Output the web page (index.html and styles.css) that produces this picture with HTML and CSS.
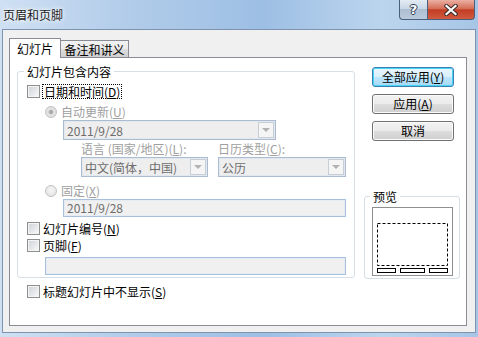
FILE: index.html
```html
<!DOCTYPE html>
<html lang="zh-CN">
<head>
  <meta charset="UTF-8">
  <title>页眉和页脚</title>
  <link rel="stylesheet" href="styles.css">
</head>
<body>
  <div class="window">
    <!-- Title bar -->
    <div class="titlebar">
      <div class="title">页眉和页脚</div>
      <div class="caption-btns">
        <div class="cap-btn help"><span>?</span></div>
        <div class="cap-btn close">
          <svg width="14" height="12" viewBox="0 0 14 12">
            <path d="M2.5 2 L11.5 10 M11.5 2 L2.5 10" stroke="#3a2a2a" stroke-width="4.2" stroke-linecap="square"/>
            <path d="M2.5 2 L11.5 10 M11.5 2 L2.5 10" stroke="#ffffff" stroke-width="2.2" stroke-linecap="square"/>
          </svg>
        </div>
      </div>
    </div>

    <div class="client">
      <!-- Tabs -->
      <div class="tabs">
        <div class="tab active">幻灯片</div>
        <div class="tab">备注和讲义</div>
      </div>

      <div class="panel">
        <div class="left-col">
          <fieldset class="group content-group">
            <legend>幻灯片包含内容</legend>

            <div class="opt row-date">
              <span class="checkbox"></span>
              <span class="label focus">日期和时间(<u>D</u>)</span>
            </div>

            <div class="opt radio-row row-auto disabled">
              <span class="radio checked"></span>
              <span class="label">自动更新(<u>U</u>)</span>
            </div>

            <div class="combo combo-date">
              <span class="combo-text">2011/9/28</span>
              <span class="drop"><i></i></span>
            </div>

            <div class="lang-grid">
              <div class="sub-label">语言 (国家/地区)(<u>L</u>):</div>
              <div class="sub-label">日历类型(<u>C</u>):</div>
              <div class="combo">
                <span class="combo-text">中文(简体，中国)</span>
                <span class="drop"><i></i></span>
              </div>
              <div class="combo">
                <span class="combo-text">公历</span>
                <span class="drop"><i></i></span>
              </div>
            </div>

            <div class="opt radio-row row-fixed disabled">
              <span class="radio"></span>
              <span class="label">固定(<u>X</u>)</span>
            </div>

            <div class="textbox textbox-fixed">2011/9/28</div>

            <div class="opt row-number">
              <span class="checkbox"></span>
              <span class="label">幻灯片编号(<u>N</u>)</span>
            </div>

            <div class="opt row-footer">
              <span class="checkbox"></span>
              <span class="label">页脚(<u>F</u>)</span>
            </div>

            <div class="textbox textbox-footer"></div>
          </fieldset>

          <div class="opt row-title">
            <span class="checkbox"></span>
            <span class="label">标题幻灯片中不显示(<u>S</u>)</span>
          </div>
        </div>

        <div class="right-col">
          <button class="btn default">全部应用(<u>Y</u>)</button>
          <button class="btn">应用(<u>A</u>)</button>
          <button class="btn">取消</button>

          <fieldset class="group preview-group">
            <legend>预览</legend>
            <div class="preview">
              <svg width="79" height="67" viewBox="0 0 79 67">
                <rect x="4.5" y="15.5" width="70" height="42" fill="none" stroke="#000" stroke-width="1" stroke-dasharray="3 2"/>
                <rect x="4.5" y="60.5" width="18" height="4" fill="#fff" stroke="#000" stroke-width="1"/>
                <rect x="27.5" y="60.5" width="24" height="4" fill="#fff" stroke="#000" stroke-width="1"/>
                <rect x="56.5" y="60.5" width="18" height="4" fill="#fff" stroke="#000" stroke-width="1"/>
              </svg>
            </div>
          </fieldset>
        </div>
      </div>
    </div>
  </div>
</body>
</html>
```

FILE: styles.css
```css
html, body { margin: 0; padding: 0; background: #a9c6e6; }
body { font-family: "Noto Sans CJK SC", "Microsoft YaHei", sans-serif; font-size: 12px; color: #000; }
u { text-decoration: underline; text-underline-offset: 1px; }

.window { width: 478px; height: 337px; box-sizing: border-box; display: flex; flex-direction: column;
  background: linear-gradient(to right, #cfe0f3 0%, #b3cdea 25%, #9dbfe4 55%, #bcd5ee 80%, #a6c5e6 100%); }

/* title bar */
.titlebar { height: 29px; display: flex; justify-content: space-between; align-items: flex-start; flex-shrink: 0; }
.title { padding: 8px 0 0 3px; line-height: 14px; color: #1a1a1a; text-shadow: 0 0 6px #fff, 0 0 3px #fff; }
.caption-btns { display: flex; margin-right: 3px; }
.cap-btn { height: 19px; border: 1px solid #4a5f7d; border-top: none; display: flex; align-items: center; justify-content: center; }
.cap-btn.help { width: 27px; border-right: none; border-bottom-left-radius: 4px;
  background: linear-gradient(#e3ebf4 0%, #c9d7e6 45%, #aebfd3 50%, #b9cadd 100%); }
.cap-btn.help span { font-family: "DejaVu Sans", sans-serif; font-weight: bold; font-size: 13px; color: #fff; line-height: 14px;
  text-shadow: 1px 0 0 #2f3d52, -1px 0 0 #2f3d52, 0 1px 0 #2f3d52, 0 -1px 0 #2f3d52; }
.cap-btn.close { width: 46px; border-bottom-right-radius: 4px;
  background: linear-gradient(#eab0a3 0%, #d66e58 45%, #c23d24 52%, #d15b40 100%); }

/* client area */
.client { flex: 1; margin: 0 2px 4px 2px; border: 1px solid #7e93ad; background: #f0f0f0; padding: 8px 8px 0 6px; }

.tabs { display: flex; align-items: flex-end; height: 19px; position: relative; z-index: 1; }
.tab { box-sizing: border-box; border: 1px solid #898c95; border-bottom: none; text-align: center; }
.tab.active { width: 52px; height: 20px; margin-bottom: -1px; background: #fff; line-height: 18px; padding-top: 1px; }
.tab:not(.active) { width: 68px; height: 17px; border-left: none; line-height: 16px; padding-top: 1px;
  background: linear-gradient(#f2f2f2 0%, #ebebeb 50%, #dddddd 51%, #cfcfcf 100%); }

.panel { box-sizing: border-box; width: 458px; height: 269px; border: 1px solid #898c95; background: #fff;
  padding: 7px 0 0 7px; display: flex; gap: 9px; }

/* group boxes */
.group { margin: 0; border: 1px solid #d5dfe5; border-radius: 3px; }
.group legend { padding: 0 3px; line-height: 13px; }

.left-col { width: 338px; }
.content-group { box-sizing: border-box; width: 338px; padding: 0 8px 2px 9px; }
.content-group legend { margin-left: -3px; }

.opt { display: flex; align-items: center; height: 15px; }
.opt .label { line-height: 13px; }
.checkbox { box-sizing: border-box; width: 13px; height: 13px; border: 1px solid #8e8f8f; margin-right: 3px;
  background: linear-gradient(135deg, #cdd1d6 0%, #eceef0 70%, #f8f8f8 100%); box-shadow: inset 0 0 0 1px #f4f4f4; }
.focus { outline: 1px dotted #000; outline-offset: 0; padding: 0 1px 0 1px; }
.radio-row { padding-left: 18px; }
.radio { box-sizing: border-box; width: 12px; height: 12px; border-radius: 50%; border: 1px solid #c2c2c2; margin-right: 4px;
  background: radial-gradient(circle at 50% 40%, #f7f7f7 0%, #dedede 100%); }
.radio.checked { background: radial-gradient(circle, #a4a4a4 0%, #b4b4b4 28%, #e6e6e6 40%, #d8d8d8 100%); }
.disabled .label { color: #a0a0a0; }

.row-date { margin-top: 6px; }
.row-auto { margin-top: 5px; }

.combo { box-sizing: border-box; height: 20px; border: 1px solid #abbbd0; background: #eeeeee; box-shadow: inset 0 0 0 1px #e2e8ef;
  display: flex; align-items: center; justify-content: space-between; color: #6d6d6d; }
.combo-text { padding-left: 3px; line-height: 17px; white-space: nowrap; }
.drop { box-sizing: border-box; width: 16px; height: 16px; margin-right: 1px; border: 1px solid #c8ced6; background: #f5f5f5;
  display: flex; align-items: center; justify-content: center; flex-shrink: 0; }
.drop i { width: 0; height: 0; border-left: 4px solid transparent; border-right: 4px solid transparent; border-top: 4px solid #b2b2b2; }
.combo-date { width: 213px; margin: 1px 0 0 36px; }

.lang-grid { display: grid; grid-template-columns: 127px 128px; column-gap: 10px; row-gap: 2px; margin: 2px 0 0 54px; }
.sub-label { color: #a0a0a0; line-height: 13px; white-space: nowrap; }

.row-fixed { margin-top: 6px; }
.textbox { box-sizing: border-box; height: 18px; border: 1px solid #a9c0dc; background: #f0f0f0; box-shadow: inset 0 0 0 1px #e6ecf3;
  color: #6d6d6d; line-height: 16px; padding-left: 3px; }
.textbox-fixed { width: 283px; margin: 1px 0 0 36px; }
.row-number { margin-top: 4px; }
.row-footer { margin-top: 2px; }
.textbox-footer { width: 301px; margin: 4px 0 0 18px; }

.row-title { margin: 6px 0 0 10px; }

/* right column */
.right-col { width: 96px; display: flex; flex-direction: column; }
.btn { box-sizing: border-box; width: 82px; height: 20px; margin: 2px 0 5px 8px; padding: 0; border: 1px solid #707070; border-radius: 3px;
  font: inherit; line-height: 16px; color: #000;
  background: linear-gradient(#f2f2f2 0%, #ebebeb 50%, #dddddd 51%, #cfcfcf 100%); box-shadow: inset 0 0 0 1px #fbfbfb; }
.btn + .btn { margin-top: 2px; }
.btn.default { border-color: #3c7fb1; background: linear-gradient(#eaf6fd 0%, #d9f0fc 50%, #bee6fd 51%, #a7d9f5 100%);
  box-shadow: inset 0 0 0 1px #48d4f7; }

.preview-group { box-sizing: border-box; width: 96px; margin-top: 44px; padding: 4px 0 2px 7px; }
.preview-group legend { margin-left: -2px; }
.preview { width: 79px; height: 67px; border: 1px solid #8e8f8f; background: #fff; }
.preview svg { display: block; }
```
